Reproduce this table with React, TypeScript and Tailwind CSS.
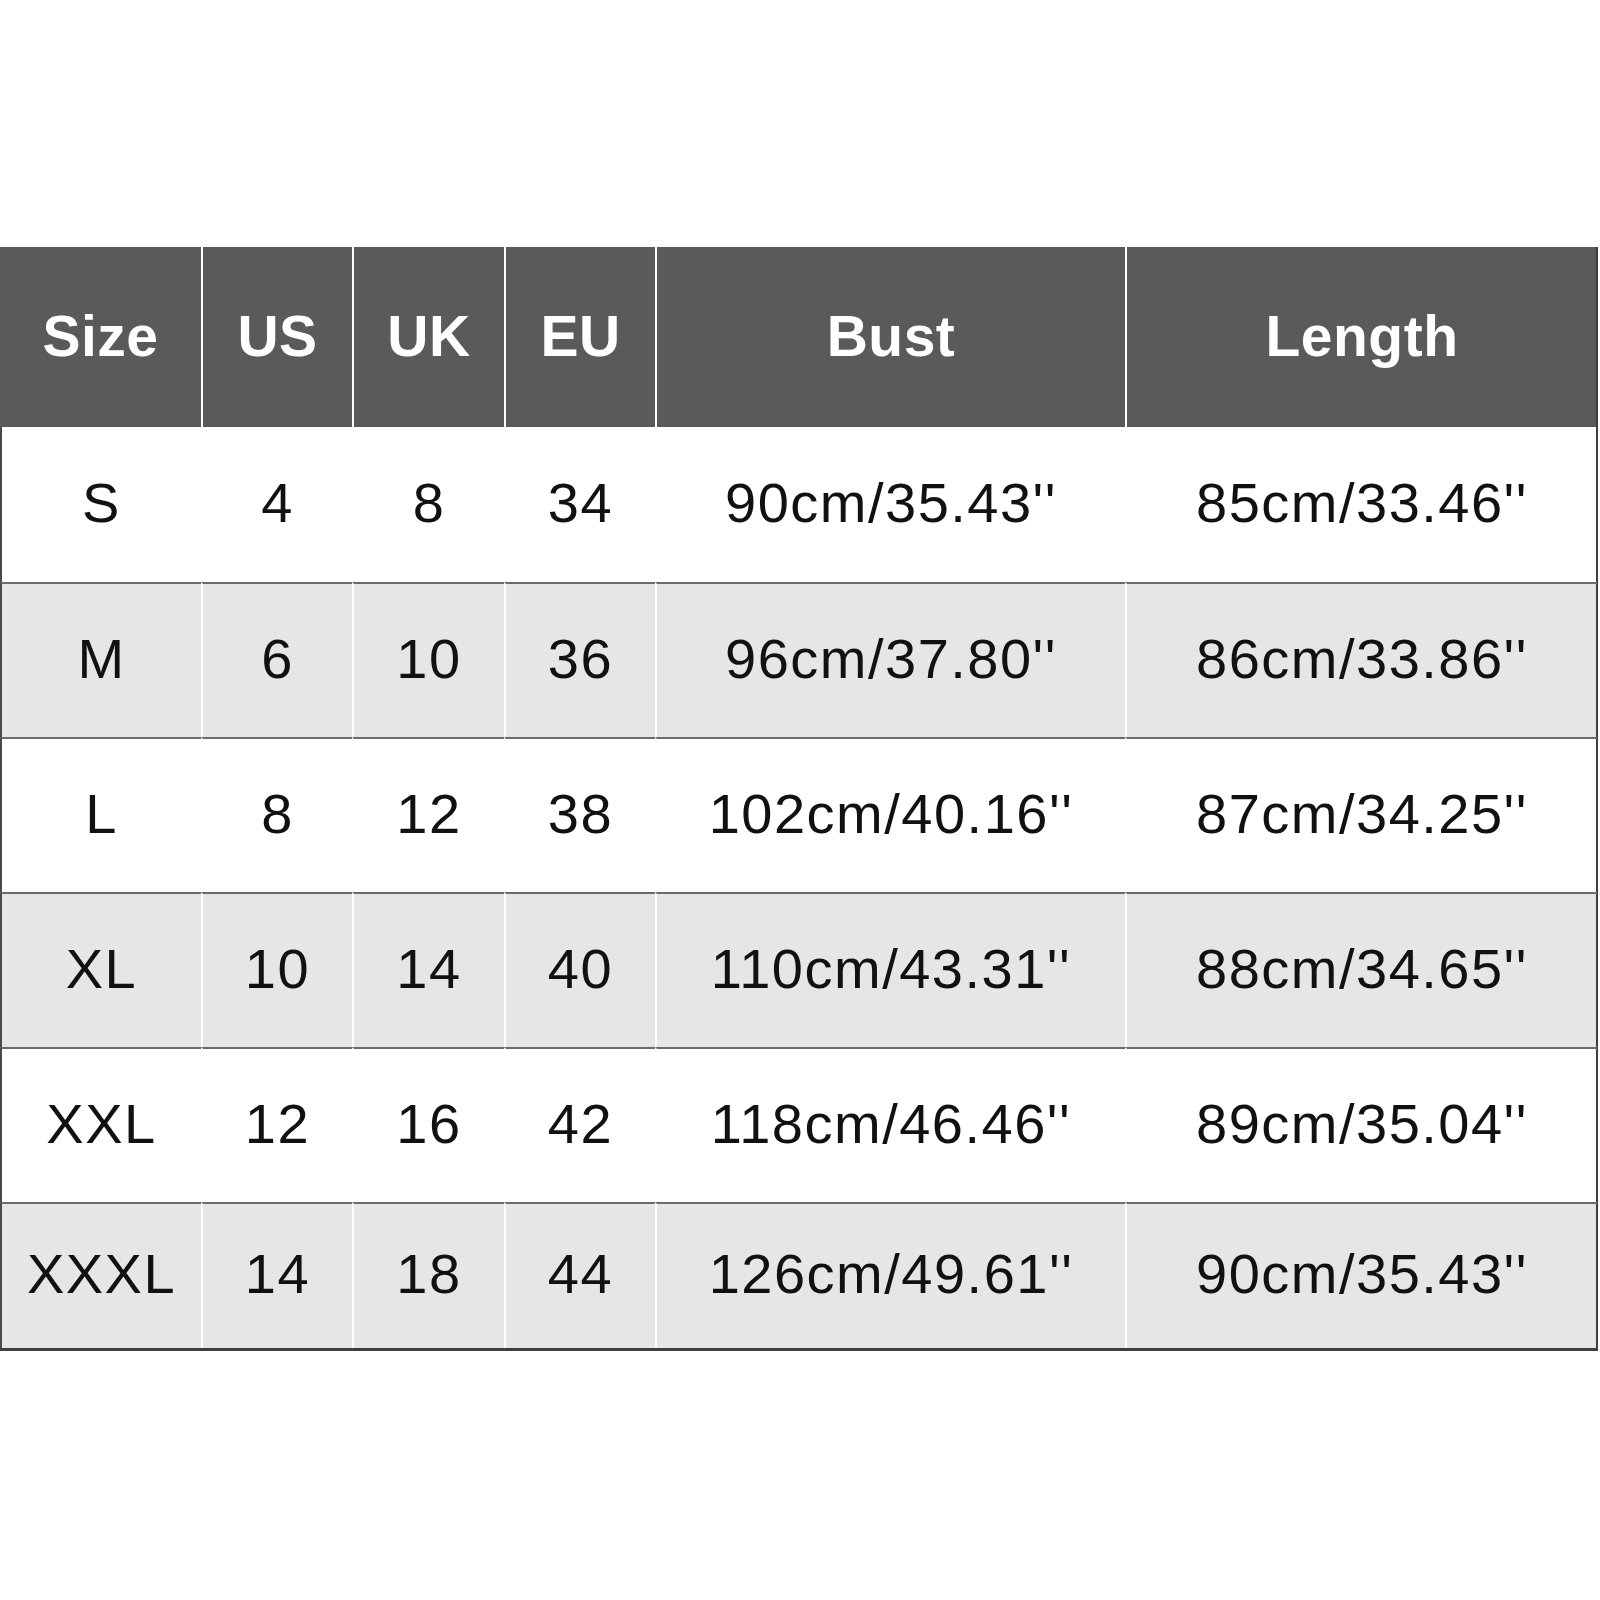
const headers = ["Size", "US", "UK", "EU", "Bust", "Length"];

const rows = [
  ["S", "4", "8", "34", "90cm/35.43''", "85cm/33.46''"],
  ["M", "6", "10", "36", "96cm/37.80''", "86cm/33.86''"],
  ["L", "8", "12", "38", "102cm/40.16''", "87cm/34.25''"],
  ["XL", "10", "14", "40", "110cm/43.31''", "88cm/34.65''"],
  ["XXL", "12", "16", "42", "118cm/46.46''", "89cm/35.04''"],
  ["XXXL", "14", "18", "44", "126cm/49.61''", "90cm/35.43''"],
];

const cols = "grid grid-cols-[201px_151px_152px_151px_470px_472px]";

export default function App() {
  return (
    <div
      className="w-[1600px] h-[1600px] bg-white pt-[247px]"
      style={{ fontFamily: '"Liberation Sans", Arial, sans-serif' }}
    >
      <div className="w-[1598px] border-r-2 border-b-[3px] border-[#3f3f3f]">
        {/* Header */}
        <div className={`${cols} h-[180px] bg-[#5a5a5a]`}>
          {headers.map((h, i) => (
            <div
              key={h}
              className={`flex items-center justify-center text-white font-bold text-[57px] tracking-[0.5px] ${
                i > 0 ? "border-l-2 border-white" : ""
              }`}
            >
              {h}
            </div>
          ))}
        </div>

        {/* Rows */}
        {rows.map((r, ri) => (
          <div
            key={r[0]}
            className={`${cols} ${ri === rows.length - 1 ? "h-[146px]" : "h-[155px]"} ${
              ri % 2 === 1 ? "bg-[#e6e6e6]" : "bg-white"
            }`}
          >
            {r.map((c, ci) => (
              <div
                key={ci}
                className={`flex items-center justify-center pb-1 text-[#111] text-[56px] tracking-[1.5px] ${
                  ri > 0 ? "border-t-2 border-t-[#6b6b6b]" : ""
                } ${ci > 0 ? "border-l-2 border-l-white" : "border-l-2 border-l-[#4a4a4a]"}`}
              >
                {c}
              </div>
            ))}
          </div>
        ))}
      </div>
    </div>
  );
}
